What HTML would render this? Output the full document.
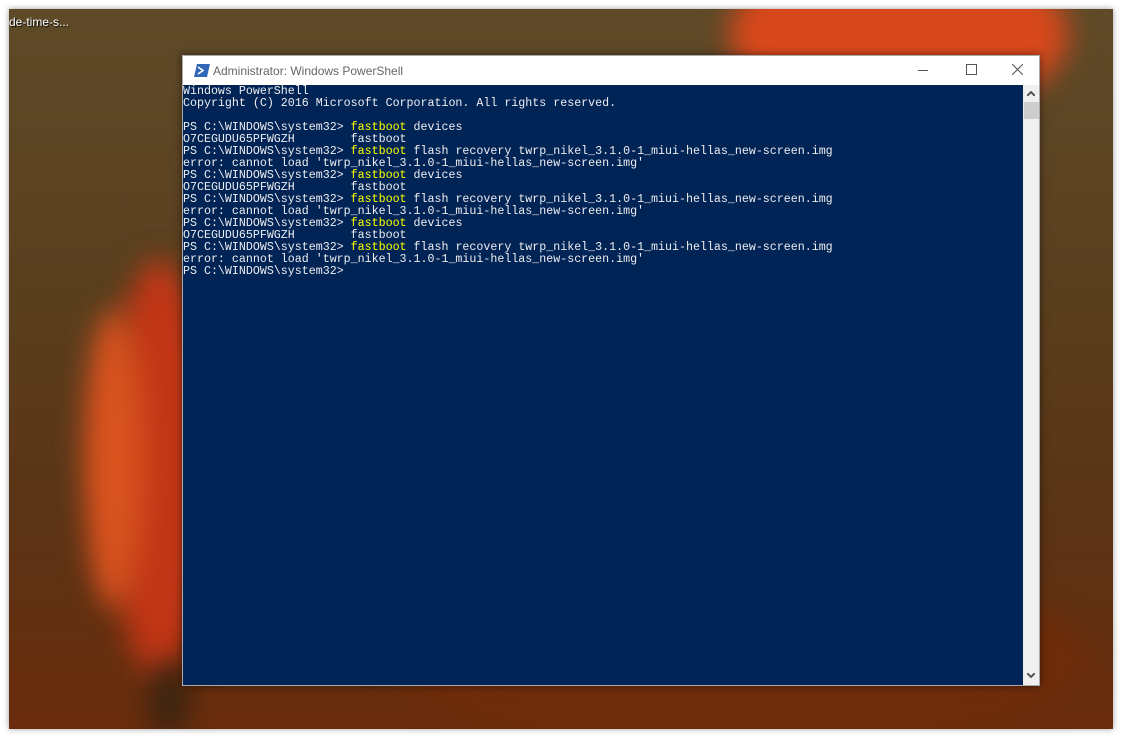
<!DOCTYPE html>
<html><head><style>
body{margin:0;width:1121px;height:738px;background:#fff;position:relative;overflow:hidden;font-family:"Liberation Sans",sans-serif}
#desk{position:absolute;left:9px;top:9px;width:1104px;height:720px;overflow:hidden;
background:linear-gradient(180deg,#5e4a28 0%,#5a3f1e 40%,#5a3416 70%,#6a2c0c 100%);box-shadow:0 0 6px rgba(0,0,0,.4)}
.b{position:absolute;border-radius:50%;filter:blur(14px)}
#win{position:absolute;left:182px;top:55px;width:858px;height:631px;background:#fff;box-shadow:0 0 8px rgba(0,0,0,.5);border:1px solid #aaa;box-sizing:border-box}
#title{position:absolute;left:30px;top:8px;font-size:12px;color:#666}
#con{position:absolute;left:0;top:30px;width:840px;height:599px;background:#012456;
font-family:"Liberation Mono",monospace;font-size:11.65px;line-height:12px;color:#eeedf0;white-space:pre;padding:0;margin:0}
#bg2{position:absolute;left:0;top:29px;width:840px;height:1px;background:#012456}
.y{color:#ffff00}
#sb{position:absolute;left:840px;top:29px;width:16px;height:600px;background:#f0f0f0}
</style></head><body>
<div id="desk">
<div class="b" style="left:720px;top:-60px;width:340px;height:170px;background:#d8481c"></div>
<div class="b" style="left:100px;top:250px;width:100px;height:420px;background:#c23616"></div>
<div class="b" style="left:75px;top:300px;width:60px;height:300px;background:#d9531f"></div>
<div class="b" style="left:140px;top:650px;width:40px;height:80px;background:#3a2410"></div>
<div class="b" style="left:380px;top:560px;width:700px;height:180px;background:#6e2c0a"></div>
<div style="position:absolute;left:0;top:6px;font-size:12px;color:#fff;text-shadow:1px 1px 1px #000">de-time-s...</div>
</div>
<div id="win">
<svg style="position:absolute;left:11px;top:8px" width="16" height="13"><polygon points="3,0 16,0 13,13 0,13" fill="#3168b9"/><path d="M4 3 L9 6.5 L4 10" stroke="#fff" stroke-width="1.6" fill="none"/></svg>
<div id="title">Administrator: Windows PowerShell</div>
<div style="position:absolute;left:735px;top:14px;width:10px;height:1px;background:#555"></div>
<div style="position:absolute;left:783px;top:8px;width:9px;height:9px;border:1px solid #555"></div>
<svg style="position:absolute;left:829px;top:8px" width="11" height="11"><path d="M0 0L11 11M11 0L0 11" stroke="#555"/></svg>
<div id="bg2"></div>
<div id="con">Windows PowerShell
Copyright (C) 2016 Microsoft Corporation. All rights reserved.

PS C:\WINDOWS\system32&gt; <span class="y">fastboot</span> devices
O7CEGUDU65PFWGZH        fastboot
PS C:\WINDOWS\system32&gt; <span class="y">fastboot</span> flash recovery twrp_nikel_3.1.0-1_miui-hellas_new-screen.img
error: cannot load 'twrp_nikel_3.1.0-1_miui-hellas_new-screen.img'
PS C:\WINDOWS\system32&gt; <span class="y">fastboot</span> devices
O7CEGUDU65PFWGZH        fastboot
PS C:\WINDOWS\system32&gt; <span class="y">fastboot</span> flash recovery twrp_nikel_3.1.0-1_miui-hellas_new-screen.img
error: cannot load 'twrp_nikel_3.1.0-1_miui-hellas_new-screen.img'
PS C:\WINDOWS\system32&gt; <span class="y">fastboot</span> devices
O7CEGUDU65PFWGZH        fastboot
PS C:\WINDOWS\system32&gt; <span class="y">fastboot</span> flash recovery twrp_nikel_3.1.0-1_miui-hellas_new-screen.img
error: cannot load 'twrp_nikel_3.1.0-1_miui-hellas_new-screen.img'
PS C:\WINDOWS\system32&gt;</div>
<div id="sb">
<svg style="position:absolute;left:4px;top:6px" width="8" height="5"><path d="M0 5L4 1L8 5" stroke="#555" stroke-width="2" fill="none"/></svg>
<div style="position:absolute;left:1px;top:17px;width:15px;height:17px;background:#cdcdcd"></div>
<svg style="position:absolute;left:4px;top:588px" width="8" height="5"><path d="M0 0L4 4L8 0" stroke="#555" stroke-width="2" fill="none"/></svg>
</div>
</div>
</body></html>
